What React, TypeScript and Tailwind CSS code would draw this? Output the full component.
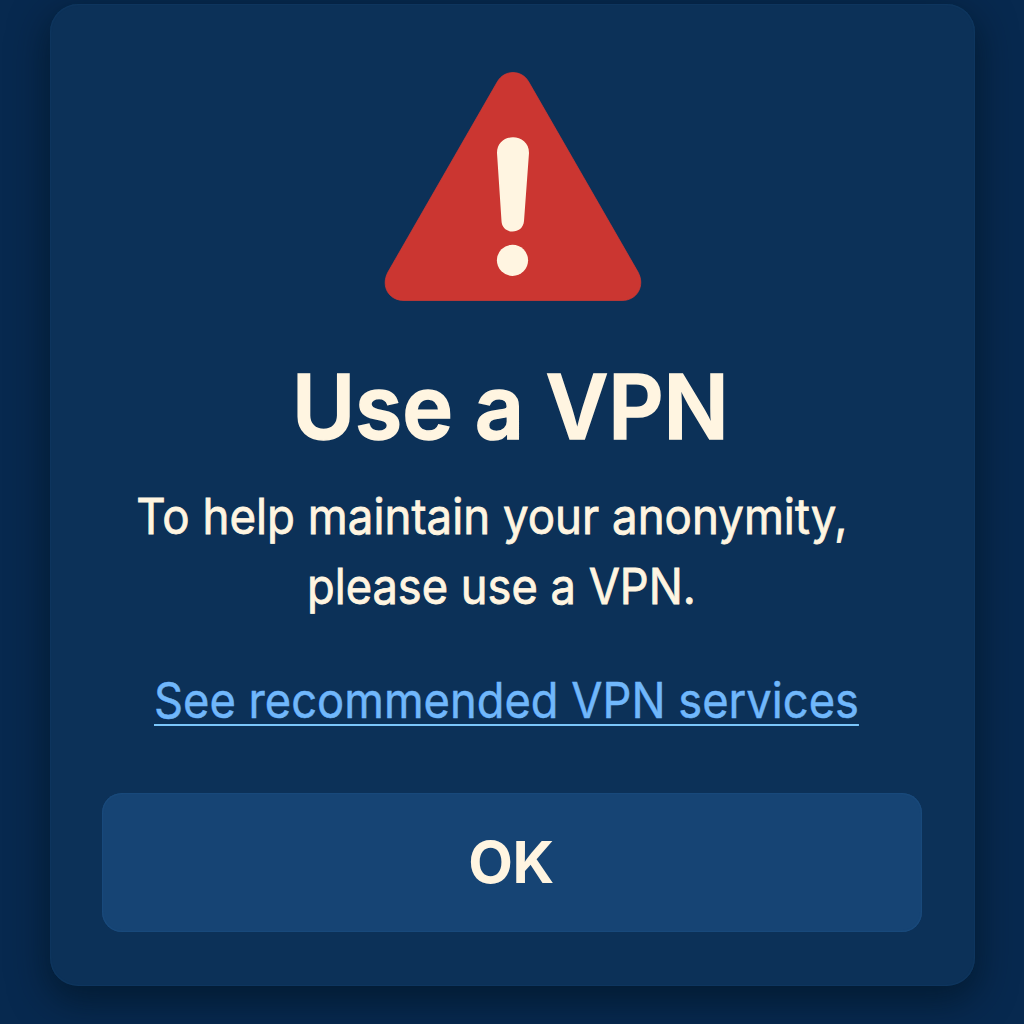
export default function App() {
  return (
    <main className="flex h-screen w-full overflow-hidden bg-[#07294f] pt-1 pl-[50px] font-['Inter',sans-serif] text-[#fff5e1]">
      <section className="flex h-[982px] w-[925px] shrink-0 flex-col items-center rounded-[28px] bg-[#0c3158] px-[52px] pt-[67px] shadow-[0_12px_36px_4px_rgba(0,20,34,0.62),inset_0_0_2px_rgba(34,87,138,0.5)]">
        <svg className="ml-px h-[231px] w-[258px] shrink-0" viewBox="384 71 258 231" aria-hidden="true">
          <path d="M497.5 81.500C504.5 69.500 521.5 69.500 528.5 81.500L638 272C645.5 286 637 300.500 622 300.500H404C388.500 300.500 380.500 286 388 272Z" fill="#cb3631" stroke="#d63a32" strokeWidth="0.7" />
          <path d="M497 153C497 132 529 132 529 153L524 221C523 235 502 235 501.500 221Z" fill="#fff5e1" />
          <circle cx="512.5" cy="260.3" r="15.6" fill="#fff5e1" />
        </svg>
        <h1 className="mt-[50px] mr-[5px] scale-x-[0.965] whitespace-nowrap text-[89px] leading-[109px] font-semibold [-webkit-text-stroke:1.6px_#fff5e1]">Use a VPN</h1>
        <p className="mt-[21px] text-center text-[49px] leading-[70px] whitespace-nowrap [-webkit-text-stroke:0.8px_#fff5e1]">
          <span className="mr-[42px] block scale-x-[0.931]">To help maintain your anonymity,</span>
          <span className="mr-[23px] block scale-x-[0.923]">please use a VPN.</span>
        </p>
        <a href="#" className="mt-[44px] mr-[12px] scale-x-[0.924] whitespace-nowrap text-[49px] leading-[70px] text-[#70b7fb] underline decoration-[#7bc6fa] decoration-[2px] underline-offset-[6px] [-webkit-text-stroke:0.5px_#70b7fb] [text-decoration-skip-ink:none]">See recommended VPN services</a>
        <button className="mt-[57px] mr-px h-[139px] w-[820px] shrink-0 rounded-[20px] bg-[#164474] pr-[2px] pb-[1px] text-[58px] font-bold tracking-[-0.5px] shadow-[inset_0_0_2px_rgba(42,101,160,0.7)]">OK</button>
      </section>
    </main>
  );
}
